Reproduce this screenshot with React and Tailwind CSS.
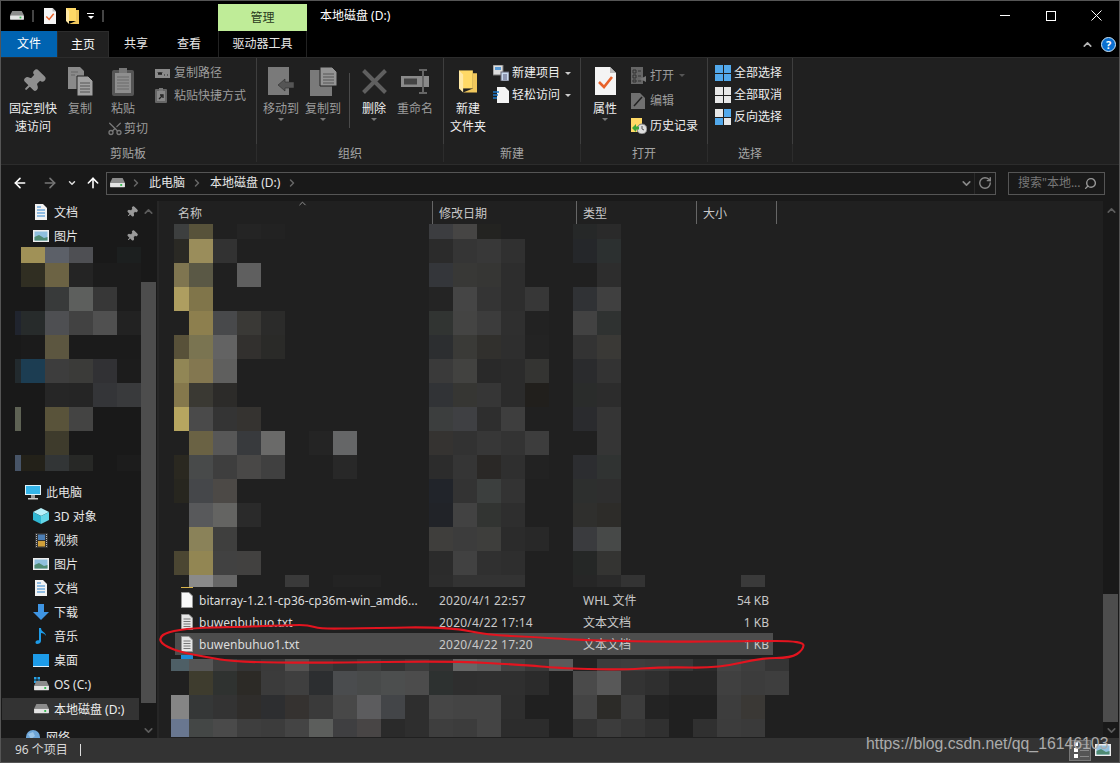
import { ArrowLeft, ArrowRight, ArrowUp, ChevronDown, ChevronRight, ChevronUp, Pin, RotateCw, Scissors, Search } from "lucide-react"

// ---------- small icons ----------
const Drive = ({ w = 15 }) => (
    <svg width={w} height={w * 0.62} viewBox="0 0 16 10">
        <polygon points="2.5,0 13.5,0 16,5 0,5" fill="#8c8c8c" />
        <rect y="5" width="16" height="5" rx="0.5" fill="#e4e4e4" />
        <rect x="11" y="6.5" width="2" height="2" fill="#31b94d" />
    </svg>
)

const PageCheck = ({ w = 12, h = 16 }) => (
    <svg width={w} height={h} viewBox="0 0 21 28">
        <path d="M0 0H15L21 6V28H0Z" fill="#f4f4f4" />
        <path d="M15 0V6H21Z" fill="#bbb" />
        <path d="M4 15L9 20L17 10" fill="none" stroke="#e8622a" strokeWidth="2.6" />
    </svg>
)

const Folder = ({ w = 13, h = 16 }) => (
    <svg width={w} height={h} viewBox="0 0 13 16">
        <path d="M0 0H10V13H0Z" fill="#ffd966" />
        <path d="M10 2H13V16H3L10 13Z" fill="#f0c75c" />
        <path d="M0 0V13L3 16V3Z" fill="#ffe9a6" />
    </svg>
)

const TextPage = ({ blank }) => (
    <svg width="12" height="16" viewBox="0 0 12 16">
        <path d="M0.5 0.5H8L11.5 4V15.5H0.5Z" fill={blank ? "#f8f8f8" : "#e6e6e6"} stroke="#999" />
        {!blank && <path d="M2.5 5H9.5M2.5 7.5H9.5M2.5 10H9.5M2.5 12.5H9.5" stroke="#777" />}
    </svg>
)

const GrayPages = () => (
    <svg width="25" height="29" viewBox="0 0 25 29">
        <path d="M0 0H12L16 4V22H0Z" fill="#8a8a8a" />
        <path d="M9 9H20L25 14V29H9Z" fill="#a2a2a2" stroke="#222" />
        <path d="M12 16H22M12 19H22M12 22H22M12 25H22" stroke="#555" />
        <path d="M3 5H10M3 8H7" stroke="#666" />
    </svg>
)

const Clipboard = () => (
    <svg width="22" height="29" viewBox="0 0 22 29">
        <rect y="3" width="22" height="26" rx="2" fill="#555" />
        <rect x="3" y="6" width="16" height="20" fill="#8e8e8e" />
        <path d="M5 10H17M5 13H17M5 16H17M5 19H17M5 22H17" stroke="#6a6a6a" />
        <rect x="7" y="1" width="8" height="5" fill="#777" />
    </svg>
)

const CopyPath = () => (
    <svg width="15" height="9" viewBox="0 0 15 9">
        <rect width="15" height="9" fill="#8a8a8a" />
        <path d="M3 3L4 6L5 3L6 6L7 3M9 6H10M12 6H13" stroke="#222" fill="none" />
    </svg>
)

const PasteLink = () => (
    <svg width="12" height="15" viewBox="0 0 12 15">
        <rect y="1" width="12" height="14" rx="1" fill="#666" />
        <rect x="2" y="3" width="8" height="10" fill="#888" />
        <rect x="4" y="0" width="4" height="3" fill="#777" />
        <path d="M4 11L7 8M5 7H8V10" stroke="#222" strokeWidth="1.3" fill="none" />
    </svg>
)

const MoveTo = () => (
    <svg width="27" height="28" viewBox="0 0 27 28">
        <path d="M0 0H21V28H0Z" fill="#7a7a7a" />
        <path d="M10 18L17 12V15H26V21H17V24Z" fill="#555" stroke="#222" strokeWidth="0.5" />
    </svg>
)

const CopyTo = () => (
    <svg width="27" height="29" viewBox="0 0 27 29">
        <path d="M0 3H22V29H0Z" fill="#7a7a7a" />
        <path d="M10 0H22L27 5V19H10Z" fill="#949494" stroke="#222" />
        <path d="M13 7H24M13 10H24M13 13H24M13 16H24" stroke="#555" />
    </svg>
)

const Cross = () => (
    <svg width="25" height="25" viewBox="0 0 25 25">
        <path d="M1.5 1.5L23.5 23.5M23.5 1.5L1.5 23.5" stroke="#5f5f5f" strokeWidth="4" />
    </svg>
)

const Rename = () => (
    <svg width="28" height="25" viewBox="0 0 28 25">
        <rect y="7" width="28" height="11" fill="#8a8a8a" />
        <rect x="3" y="9.5" width="13" height="6" fill="#444" />
        <path d="M18 1H26M22 1V24M18 24H26" stroke="#666" strokeWidth="2" fill="none" />
    </svg>
)

const NewItem = () => (
    <svg width="16" height="16" viewBox="0 0 16 16">
        <rect width="10" height="10" fill="#ddd" stroke="#777" />
        <rect x="2" y="2" width="6" height="3" fill="#5b9bd5" />
        <rect x="8" y="7" width="8" height="9" fill="#c9d9ee" stroke="#667" />
        <path d="M10 10H14M10 12H14M10 14H14" stroke="#557" />
    </svg>
)

const EasyAccess = () => (
    <svg width="16" height="16" viewBox="0 0 16 16">
        <path d="M4 0H12L16 4V16H4Z" fill="#f4f4f4" />
        <path d="M0 5H6M0 8H5M0 11H4" stroke="#1d78c9" strokeWidth="1.5" />
    </svg>
)

const OpenIcon = () => (
    <svg width="16" height="17" viewBox="0 0 16 17">
        <rect width="12" height="17" fill="#666" />
        <path d="M2 3H5V6H2ZM2 8H5V11H2ZM2 13H5V15H2ZM7 4H10M7 9H10M7 14H10" stroke="#333" fill="none" />
        <path d="M9 12L15 9V15Z" fill="#777" />
    </svg>
)

const EditIcon = () => (
    <svg width="14" height="16" viewBox="0 0 14 16">
        <path d="M0 0H9L14 5V16H0Z" fill="#707070" />
        <path d="M3 13L11 4" stroke="#222" strokeWidth="1.5" />
    </svg>
)

const HistoryIcon = () => (
    <svg width="16" height="16" viewBox="0 0 16 16">
        <rect width="11" height="14" y="0" fill="#ffd966" />
        <circle cx="11" cy="11" r="5" fill="#ddd" stroke="#777" />
        <path d="M11 8V11L13 12" stroke="#555" fill="none" />
        <path d="M1 10L5 6V8.5H8V11.5H5V14Z" fill="#3aa53a" />
    </svg>
)

const Quad = ({ colors }) => (
    <div className="grid h-[16px] w-[16px] grid-cols-2 gap-[1px]">
        {colors.map((c, i) => (
            <span key={i} style={{ backgroundColor: c }} />
        ))}
    </div>
)

const NavDoc = () => (
    <svg width="12" height="16" viewBox="0 0 12 16">
        <path d="M0 0H8L12 4V16H0Z" fill="#f2f2f2" />
        <path d="M2 3H6M2 6H10M2 9H10M2 12H10" stroke="#2f86d1" />
    </svg>
)

const NavPicture = () => (
    <svg width="16" height="12" viewBox="0 0 16 12">
        <rect width="16" height="12" fill="#eee" />
        <rect x="1.5" y="1.5" width="13" height="9" fill="#8fbfdd" />
        <path d="M1.5 7L6 5L11 8L14.5 7V10.5H1.5Z" fill="#4f8a72" />
    </svg>
)

const NavPc = () => (
    <svg width="16" height="15" viewBox="0 0 16 15">
        <rect width="16" height="10" fill="#dff3fb" />
        <rect x="1" y="1" width="14" height="8" fill="#35b5ea" />
        <rect x="6" y="10" width="4" height="3" fill="#999" />
        <rect x="3" y="13" width="10" height="1.5" fill="#ccc" />
    </svg>
)

const Nav3d = () => (
    <svg width="16" height="16" viewBox="0 0 16 16">
        <path d="M8 0L16 4L8 8L0 4Z" fill="#b7f0fa" />
        <path d="M0 4L8 8V16L0 12Z" fill="#2fb7d3" />
        <path d="M16 4L8 8V16L16 12Z" fill="#63d6e8" />
    </svg>
)

const NavVideo = () => (
    <svg width="13" height="15" viewBox="0 0 13 15">
        <rect width="13" height="15" fill="#333" />
        <rect x="3" y="1.5" width="7" height="5.5" fill="#4d7fb5" />
        <rect x="3" y="8" width="7" height="5.5" fill="#d0a03a" />
        <path d="M1.5 1V14M11.5 1V14" stroke="#bbb" strokeDasharray="1 1" />
    </svg>
)

const NavDown = () => (
    <svg width="16" height="16" viewBox="0 0 16 16">
        <path d="M5 0H11V8H16L8 16L0 8H5Z" fill="#3f95e3" />
    </svg>
)

const NavMusic = () => (
    <svg width="12" height="16" viewBox="0 0 12 16">
        <path d="M4 0H6C6 4 11 4 11 8C10 6 8 5 6 5V13C6 15 4 16 2 16C0 16 0 13 2 12.5C3 12 4 12 4 12.5Z" fill="#1d9be8" />
    </svg>
)

const NavDesktop = () => (
    <svg width="16" height="13" viewBox="0 0 16 13">
        <rect width="16" height="12" fill="#1d9be8" />
        <path d="M0 12H16V13H0Z" fill="#dfeffa" />
    </svg>
)

const NavC = () => (
    <div className="flex flex-col items-start">
        <svg width="6" height="6" viewBox="0 0 6 6" className="-mb-[2px]">
            <path d="M0 0H2.5V2.5H0ZM3.5 0H6V2.5H3.5ZM0 3.5H2.5V6H0ZM3.5 3.5H6V6H3.5Z" fill="#27a3e8" />
        </svg>
        <Drive w={15} />
    </div>
)

const NavGlobe = () => (
    <svg width="14" height="14" viewBox="0 0 14 14">
        <circle cx="7" cy="7" r="7" fill="#6ea6d8" />
        <path d="M2 4L7 2L9 6L5 9Z" fill="#9ac5e8" />
    </svg>
)

const Tri = ({ color = "border-t-[#a8a8a8]" }) => <span className={`inline-block border-x-[3px] border-t-[3px] border-x-transparent ${color}`} />

// ---------- ribbon ----------
const BigBtn = ({ icon, label, w, cls = "", tint = "text-[#9c9c9c]", arrow }) => (
    <div className={`flex shrink-0 flex-col items-center ${w} ${cls}`}>
        <div className="flex h-[38px] items-center justify-center">{icon}</div>
        <div className={`text-center leading-[18px] ${tint}`}>
            {label.map((l) => (
                <div key={l} className="whitespace-nowrap">{l}</div>
            ))}
        </div>
        {arrow && <Tri color="border-t-[#777]" />}
    </div>
)

const SmallBtn = ({ icon, label, h = "h-[22px]", tint = "text-[#eee]", arrow, gap = "w-[19px]" }) => (
    <div className={`flex items-center ${h} ${tint}`}>
        <div className={`flex shrink-0 items-center ${gap}`}>{icon}</div>
        <span className="whitespace-nowrap">{label}</span>
        {arrow && <span className="ml-[5px] flex"><Tri color={arrow} /></span>}
    </div>
)

const Group = ({ w, label, children }) => (
    <div className={`flex flex-col ${w}`}>
        <div className="flex h-[86px] border-r border-[#3e3e3e] pt-[4px]">{children}</div>
        <div className="flex h-[18px] items-center justify-center border-r border-[#2c2c2c] pt-[2px] text-[#a5a5a5]">{label}</div>
    </div>
)

function Ribbon() {
    return (
        <div className="flex h-[108px] border-y border-[#2c2c2c] bg-[#202020]">
            <Group w="w-[257px]" label="剪贴板">
                <div className="flex pl-[8px]">
                    <BigBtn w="w-[50px]" tint="text-[#eee]" label={["固定到快", "速访问"]} icon={<Pin size={25} className="rotate-45 text-[#8f8f8f]" fill="#8f8f8f" />} />
                    <BigBtn w="w-[36px]" cls="ml-[4px]" label={["复制"]} icon={<GrayPages />} />
                    <div className="flex w-[50px] flex-col">
                        <BigBtn w="w-[50px]" label={["粘贴"]} icon={<Clipboard />} />
                        <div className="flex h-[21px] items-center pl-[9px] text-[#9c9c9c]">
                            <Scissors size={17} className="w-[17px] -rotate-90 text-[#777]" />
                            <span className="ml-[1px] whitespace-nowrap">剪切</span>
                        </div>
                    </div>
                    <div className="ml-[7px] flex flex-col">
                        <SmallBtn h="h-[22px]" tint="text-[#9c9c9c]" label="复制路径" icon={<CopyPath />} />
                        <SmallBtn h="h-[23px]" tint="text-[#9c9c9c]" label="粘贴快捷方式" icon={<PasteLink />} />
                    </div>
                </div>
            </Group>
            <Group w="w-[187px]" label="组织">
                <div className="flex pl-[5px]">
                    <BigBtn w="w-[38px]" label={["移动到"]} icon={<MoveTo />} arrow />
                    <BigBtn w="w-[42px]" cls="ml-[2px]" label={["复制到"]} icon={<CopyTo />} arrow />
                    <div className="ml-[5px] mt-[11px] h-[55px] w-px bg-[#4a4a4a]" />
                    <BigBtn w="w-[28px]" cls="ml-[10px]" tint="text-[#eee]" label={["删除"]} icon={<Cross />} arrow />
                    <BigBtn w="w-[40px]" cls="ml-[7px]" label={["重命名"]} icon={<Rename />} />
                </div>
            </Group>
            <Group w="w-[137px]" label="新建">
                <div className="flex pl-[4px]">
                    <BigBtn w="w-[40px]" tint="text-[#eee]" label={["新建", "文件夹"]} icon={<Folder w={18} h={27} />} />
                    <div className="ml-[5px] flex flex-col">
                        <SmallBtn label="新建项目" arrow="border-t-[#ccc]" icon={<NewItem />} />
                        <SmallBtn label="轻松访问" arrow="border-t-[#ccc]" icon={<EasyAccess />} />
                    </div>
                </div>
            </Group>
            <Group w="w-[127px]" label="打开">
                <div className="flex pl-[9px]">
                    <BigBtn w="w-[30px]" tint="text-[#eee]" label={["属性"]} icon={<PageCheck w={21} h={28} />} arrow />
                    <div className="ml-[11px] flex flex-col pt-[1px]">
                        <SmallBtn h="h-[25px]" tint="text-[#9c9c9c]" label="打开" arrow="border-t-[#555]" icon={<OpenIcon />} />
                        <SmallBtn h="h-[25px]" tint="text-[#9c9c9c]" label="编辑" icon={<EditIcon />} />
                        <SmallBtn h="h-[25px]" label="历史记录" icon={<HistoryIcon />} />
                    </div>
                </div>
            </Group>
            <Group w="w-[85px]" label="选择">
                <div className="flex flex-col pl-[7px]">
                    <SmallBtn label="全部选择" icon={<Quad colors={["#52a9ec", "#52a9ec", "#52a9ec", "#52a9ec"]} />} />
                    <SmallBtn label="全部取消" icon={<Quad colors={["#e8e8e8", "#e8e8e8", "#e8e8e8", "#e8e8e8"]} />} />
                    <SmallBtn label="反向选择" icon={<Quad colors={["#e8e8e8", "#52a9ec", "#52a9ec", "#e8e8e8"]} />} />
                </div>
            </Group>
        </div>
    )
}

// ---------- mosaic data, one string per blurred row ----------
const Cells = ({ tokens, first }) => (
    <>
        {tokens.split(" ").map((c, i) => (
            <span key={i} className={i === 0 && first ? first : "w-[24px] shrink-0"} style={c === "." ? undefined : { backgroundColor: `#${c}` }} />
        ))}
    </>
)

const upperRows = [
    [15, "3d3f3f 57523a 202020 242424 222222", "3c3d40 464544 232321", "262828 2a2a2a"],
    [24, "2a2924 9a8d5b 323232", "2b2b2b 353535 383838 303030", "25272a 2c3030"],
    [24, "7f7550 5a5845 . 5f5f5f", "34363a 383836 363634 2d2d2d", ". 2d2d2d"],
    [24, "ae9e60 80754a", "242424 454545 343434 2d2d2d 373737", "303235 404040"],
    [24, ". 8d7f4e 48494b 3a3936 2b2b2a", "313432 444443 3c3c3c 2f2f2f 222222", "424242 2f3231"],
    [24, "585139 7a7451 636363 32302e 2a2a28", "2c2e30 3a3a37 31302d 2e2e2e 232323", "333333 3a3936"],
    [24, "918655 837750 5f5f5e", "3a3a3a 424240 292929 2b2b2b 343432", "2a2b2d 333333"],
    [24, "85784c 3a3933 2c2b29", "313336 363633 363636 2b2b2b 211f1c", "2a2c2b 2c2c2c"],
    [24, "b7a660 4a4a4a 343434 353330", "3c3e3e 3f4043 2e2e2e 3e3e3e", "2a2b2e 353535"],
    [24, ". 6a6244 575757 383a3d 6a6a69 . 242424 656667", "353331 323232 373737 333333 3d3d3d", ". 353535"],
    [24, "2a2820 484a4a 3e3e3e 494847 404040 . . 282828", "2c2c2c 353535 2a2826 2f2f2f 222222", "2c2d30 303332"],
    [24, "27261f 45474a 4c4946", "21242a 333333 3c3f3e 333333", "2d2f2e 2e2e2e"],
    [24, ". 58595b 646462 2a2a2a", "212328 424242 323432 2e2e2e", "2f2f2d 2d2c29"],
    [24, ". 8a8259 3f3f3e", "3f3e3c 3c3c3c 3e3e3c 2b2b2b 282828", "3a3b3e 474948"],
    [24, "4b4632 928653 414141 424140", "2b2b2b 414141 303030 2e2e2e", "252726 343432"],
    [12, ". 8a8a8a 666666 . . 3a3a3a . 232323 232323", "2c2c2c 333333 333333 333333", "262626 2a2a2a 333333 . . . . 3a3a3a"],
]

const lowerRows = [
    [12, "4e5f66 555555 3e3e3e 343434 3a3a3a 555352 3a3a3a 333333 3c3c3c 333333 3c3c3c 333333 666666 5e5e5e 444444 3a3a3a 5a5a5a 232323 3c3c3c 3e3e3e 3c3c3c 383838 2b2b2b 444444 3e3e3e 353535"],
    [24, ". 3e3c2e 2f3230 2c2a26 3b3b3b 3f3f3f 2c2e30 4a4c4e 484a4a 4c4e4e 4c4c4c 2d3130 2e2e2e 2f2f2f 2f2f2f 2b2b2b . 4a4a4a 585858 333333 2f2f2f 262626 262626 404040 3c3c3c 3e3e3e"],
    [24, "858585 353737 333333 2f2d2b 2d2e30 353230 3a3a3a 484848 5c5c5e 434548 2e2e2e 464646 444444 444444 2e2e2e . . 444444 2c2b28 3c3c3c 232323 . . 3d3d3d 3a3835"],
    [18, "697790 444746 4a4a4a 3e3e3e 3c3c3c 444444 5c5e5c 3f3f41 484545 2a2a2a 2e2e2e 3e3e3e 3c3c3c 444444 2c2c2c 2c2c2c . 333333 3c3c3c 363636 303030 . 303030 3c3c3c 3a3a3a"],
]

const navRows = [
    [16, ". a09157 5c6068 4e4f53 . 1c1f1f"],
    [24, ". 302e22 6c6344 242424 1c1c1c 1c1c1c"],
    [24, ". . 383a3a 5d5f5d 373737 1c1c1c"],
    [24, "20242e 272b2b 4e4f52 424242 505050 222222"],
    [24, ". 1b1b1b 5c5640 1b1b1b 1b1b1b 1b1b1b"],
    [24, "222a2e 1c3d52 3d3d3d 3b3b39 313134 1c1c1c"],
    [24, ". . 262626 252525 343538 393a3c"],
    [24, "5e6254 . 59533a 444443"],
    [24, ". . 3e3b2c"],
    [16, "475467 232119 323536 272826 . 1c1c1c"],
]

// ---------- navigation pane ----------
const NavRow = ({ icon, label, level = 2, pin }) => (
    <div className={`flex h-[24px] shrink-0 items-center text-[#e6e6e6] ${level === 1 ? "pl-[25px]" : "pl-[33px]"}`}>
        <div className="flex w-[16px] shrink-0 justify-center">{icon}</div>
        <span className="ml-[5px] whitespace-nowrap pt-[2px]">{label}</span>
        {pin && <Pin size={12} className="ml-auto mr-[3px] rotate-45 text-[#9a9a9a]" fill="#9a9a9a" />}
    </div>
)

function NavPane() {
    return (
        <div className="flex w-[157px] shrink-0 bg-[#191919]">
            <div className="flex w-[141px] shrink-0 flex-col overflow-hidden">
                <div className="-mt-[1px] h-[24px]"><NavRow icon={<NavDoc />} label="文档" pin /></div>
                <div className="h-[23px]"><NavRow icon={<NavPicture />} label="图片" pin /></div>
                <div className="flex h-[224px] shrink-0 flex-col pl-[15px]">
                    {navRows.map(([h, t], i) => (
                        <div key={i} className="flex shrink-0" style={{ height: h }}>
                            <Cells tokens={t} first="w-[6px] shrink-0" />
                        </div>
                    ))}
                </div>
                <div className="h-[9px] shrink-0" />
                <NavRow level={1} icon={<NavPc />} label="此电脑" />
                <NavRow icon={<Nav3d />} label="3D 对象" />
                <NavRow icon={<NavVideo />} label="视频" />
                <NavRow icon={<NavPicture />} label="图片" />
                <NavRow icon={<NavDoc />} label="文档" />
                <NavRow icon={<NavDown />} label="下载" />
                <NavRow icon={<NavMusic />} label="音乐" />
                <NavRow icon={<NavDesktop />} label="桌面" />
                <NavRow icon={<NavC />} label="OS (C:)" />
                <div className="mx-[2px] mt-[2px] flex h-[22px] shrink-0 items-center bg-[#333333] pl-[31px] text-[#eee]">
                    <div className="flex w-[16px] justify-center"><Drive w={15} /></div>
                    <span className="ml-[5px] whitespace-nowrap pt-[1px]">本地磁盘 (D:)</span>
                </div>
                <div className="mt-[5px]"><NavRow level={1} icon={<NavGlobe />} label="网络" /></div>
            </div>
            <div className="flex w-[15px] shrink-0 flex-col">
                <div className="flex h-[81px] justify-center pt-[4px]"><ChevronUp size={13} strokeWidth={3} className="text-[#5c5c5c]" /></div>
                <div className="h-[421px] bg-[#4d4d4d]" />
                <div className="flex flex-1 items-end justify-center pb-[1px]"><ChevronDown size={13} strokeWidth={3} className="text-[#5c5c5c]" /></div>
            </div>
        </div>
    )
}

// ---------- file list ----------
const files = [
    { name: "bitarray-1.2.1-cp36-cp36m-win_amd6...", date: "2020/4/1 22:57", type: "WHL 文件", size: "54 KB", blank: true },
    { name: "buwenbuhuo.txt", date: "2020/4/22 17:14", type: "文本文档", size: "1 KB" },
    { name: "buwenbuhuo1.txt", date: "2020/4/22 17:20", type: "文本文档", size: "1 KB", selected: true },
]

function FilePane() {
    return (
        <div className="flex w-[944px] shrink-0 flex-col bg-[#202020]">
            <div className="flex h-[23px] shrink-0 text-[#c8c8c8]">
                <div className="relative flex w-[274px] items-center border-r border-[#666] pl-[19px] pt-[3px]">
                    名称
                    <ChevronUp size={11} className="absolute left-[138px] top-[-3px] text-[#999]" />
                </div>
                <div className="flex w-[144px] items-center border-r border-[#666] pl-[6px] pt-[3px]">修改日期</div>
                <div className="flex w-[120px] items-center border-r border-[#666] pl-[6px] pt-[3px]">类型</div>
                <div className="flex w-[80px] items-center border-r border-[#666] pl-[6px] pt-[3px]">大小</div>
            </div>
            <div className="flex shrink-0 flex-col pl-[15px]">
                {upperRows.map(([h, a, b, c], i) => (
                    <div key={i} className="flex" style={{ height: h }}>
                        <div className="flex w-[255px] shrink-0"><Cells tokens={a} first="w-[15px] shrink-0" /></div>
                        <div className="flex w-[144px] shrink-0"><Cells tokens={b} /></div>
                        <div className="flex flex-1"><Cells tokens={c} /></div>
                    </div>
                ))}
            </div>
            <div className="ml-[22px] h-[1px] w-[12px] shrink-0 bg-[#d9b44a]" />
            <div className="h-[1px] shrink-0" />
            <div className="ml-[16px] flex w-[598px] shrink-0 flex-col text-[#dcdcdc]">
                {files.map((f) => (
                    <div key={f.name} className={`flex h-[22px] items-center ${f.selected ? "bg-[#4d4d4d]" : ""}`}>
                        <div className="flex w-[258px] shrink-0 items-center pl-[6px]">
                            <div className="flex w-[18px] shrink-0"><TextPage blank={f.blank} /></div>
                            <span className="whitespace-nowrap pt-[2px]">{f.name}</span>
                        </div>
                        <div className="w-[144px] shrink-0 whitespace-nowrap pl-[6px] pt-[2px] tracking-[0.2px] text-[#c8c8c8]">{f.date}</div>
                        <div className="w-[120px] shrink-0 whitespace-nowrap pl-[6px] pt-[2px] text-[#c8c8c8]">{f.type}</div>
                        <div className="flex-1 whitespace-nowrap pr-[4px] pt-[2px] text-right text-[#c8c8c8]">{f.size}</div>
                    </div>
                ))}
            </div>
            <div className="ml-[22px] h-[4px] w-[12px] shrink-0 bg-[#1a8ad4]" />
            <div className="flex shrink-0 flex-col pl-[12px]">
                {lowerRows.map(([h, t], i) => (
                    <div key={i} className="flex" style={{ height: h }}>
                        <Cells tokens={t} first="w-[18px] shrink-0" />
                    </div>
                ))}
            </div>
        </div>
    )
}

// smooth closed curve through the hand-drawn scribble
const scribble = [[291, 625], [235, 627], [193, 628], [167, 632], [159, 638], [163, 645], [180, 652], [206, 657], [235, 662], [321, 663], [449, 661], [526, 665], [556, 668], [620, 670], [663, 667], [718, 668], [761, 658], [791, 658], [803, 650], [804, 641], [748, 641], [663, 642], [577, 640], [535, 637], [488, 635], [449, 627], [364, 628], [321, 629], [308, 625]]
const scribblePath = () => {
    const mid = (a, b) => [(a[0] + b[0]) / 2, (a[1] + b[1]) / 2]
    const n = scribble.length
    const start = mid(scribble[n - 1], scribble[0])
    let d = `M${start[0]} ${start[1]}`
    scribble.forEach((p, i) => {
        const m = mid(p, scribble[(i + 1) % n])
        d += `Q${p[0]} ${p[1]} ${m[0]} ${m[1]}`
    })
    return d
}

export default function App() {
    return (
        <div className="relative h-[763px] w-[1120px] overflow-hidden bg-black text-[12px] text-white [font-family:'Noto_Sans','Noto_Sans_CJK_SC',sans-serif]">
            {/* title bar */}
            <div className="flex h-[31px] items-center">
                <div className="ml-[10px] flex w-[14px]"><Drive w={14} /></div>
                <div className="ml-[8px] h-[12px] w-[2px] bg-[#444]" />
                <div className="ml-[10px] flex"><PageCheck /></div>
                <div className="ml-[10px] flex"><Folder /></div>
                <div className="ml-[8px] flex w-[7px] flex-col items-center gap-[2px]">
                    <span className="h-px w-[7px] bg-white" />
                    <span className="border-x-[3px] border-t-[3px] border-x-transparent border-t-white" />
                </div>
                <div className="ml-[8px] h-[12px] w-[2px] bg-[#444]" />
                <div className="ml-[114px] mt-[4px] flex h-[27px] w-[89px] items-center justify-center bg-[#bfec98] text-[#2a3a20]">管理</div>
                <div className="ml-[13px] whitespace-nowrap">本地磁盘 (D:)</div>
                <div className="flex-1" />
                <div className="flex h-[31px] w-[46px] items-center justify-center"><span className="h-px w-[10px] bg-white" /></div>
                <div className="flex h-[31px] w-[46px] items-center justify-center pr-[1px]"><span className="h-[10px] w-[10px] border border-white" /></div>
                <div className="flex h-[31px] w-[46px] items-center justify-center pr-[2px]">
                    <svg width="11" height="11" viewBox="0 0 11 11"><path d="M0.5 0.5L10.5 10.5M10.5 0.5L0.5 10.5" stroke="#fff" /></svg>
                </div>
            </div>

            {/* tabs */}
            <div className="flex h-[26px] items-stretch">
                <div className="ml-[1px] flex w-[56px] items-center justify-center bg-[#0063b1]">文件</div>
                <div className="flex w-[52px] items-center justify-center border-x border-t border-[#2c2c2c] bg-[#202020]">主页</div>
                <div className="flex w-[54px] items-center justify-center text-[#e6e6e6]">共享</div>
                <div className="flex w-[52px] items-center justify-center text-[#e6e6e6]">查看</div>
                <div className="ml-[3px] flex w-[89px] items-center justify-center border-x border-[#222] text-[#e6e6e6]">驱动器工具</div>
                <div className="flex-1" />
                <div className="flex items-center"><ChevronUp size={13} strokeWidth={3} className="text-[#b5b5b5]" /></div>
                <div className="ml-[7px] mr-[4px] flex items-center">
                    <span className="flex h-[15px] w-[15px] items-center justify-center rounded-full border border-[#cfe6f8] bg-[#0a6fd0] text-[11px] font-bold leading-none">?</span>
                </div>
            </div>

            <Ribbon />

            {/* address bar */}
            <div className="flex h-[36px] items-center bg-[#191919]">
                <ArrowLeft size={16} strokeWidth={2.4} className="ml-[12px] text-white" />
                <ArrowRight size={16} strokeWidth={2.4} className="ml-[14px] text-[#777]" />
                <ChevronDown size={10} strokeWidth={3.5} className="ml-[9px] text-[#ddd]" />
                <ArrowUp size={16} strokeWidth={2.4} className="ml-[8px] text-white" />
                <div className="ml-[5px] flex h-[23px] w-[890px] items-center border border-[#555] text-[#e6e6e6]">
                    <div className="ml-[3px] flex w-[15px]"><Drive w={15} /></div>
                    <ChevronRight size={12} strokeWidth={3} className="ml-[5px] text-[#666]" />
                    <span className="ml-[7px] whitespace-nowrap">此电脑</span>
                    <ChevronRight size={12} strokeWidth={3} className="ml-[6px] text-[#666]" />
                    <span className="ml-[7px] whitespace-nowrap">本地磁盘 (D:)</span>
                    <ChevronRight size={12} strokeWidth={3} className="ml-[6px] text-[#666]" />
                    <div className="flex-1" />
                    <ChevronDown size={13} strokeWidth={3} className="text-[#888]" />
                    <div className="ml-[1px] h-full w-px bg-[#2a2a2a]" />
                    <RotateCw size={14} strokeWidth={2.4} className="mx-[3px] text-[#888]" />
                </div>
                <div className="ml-[12px] flex h-[23px] w-[97px] items-center border border-[#555] pl-[9px] text-[#777]">
                    <span className="whitespace-nowrap">搜索"本地...</span>
                    <Search size={13} strokeWidth={2.6} className="ml-auto mr-[7px] -scale-x-100 text-[#999]" />
                </div>
            </div>

            {/* main area */}
            <div className="flex h-[537px]">
                <NavPane />
                <div className="w-[2px] shrink-0 bg-[#262626]" />
                <FilePane />
                <div className="flex w-[17px] shrink-0 flex-col bg-[#191919]">
                    <div className="flex h-[393px] justify-center pt-[3px]"><ChevronUp size={13} strokeWidth={3} className="text-[#5c5c5c]" /></div>
                    <div className="mr-[2px] h-[128px] bg-[#4d4d4d]" />
                    <div className="flex flex-1 items-center justify-center"><ChevronDown size={13} strokeWidth={3} className="text-[#5c5c5c]" /></div>
                </div>
            </div>

            {/* status bar */}
            <div className="flex h-[25px] items-center border-b border-[#555] bg-[#333333] pl-[15px] text-[#d8d8d8]">
                <span className="whitespace-nowrap">96 个项目</span>
                <span className="ml-[12px] h-[12px] w-px bg-[#ddd]" />
                <div className="flex-1" />
                <div className="flex h-[21px] w-[22px] flex-col items-start justify-center gap-[2px] border border-[#777] bg-[#555] pl-[4px]">
                    <span className="flex items-center gap-[2px]"><span className="h-[4px] w-[4px] bg-white" /><span className="h-px w-[9px] bg-[#888]" /></span>
                    <span className="flex items-center gap-[2px]"><span className="h-[4px] w-[4px] bg-white" /><span className="h-px w-[9px] bg-[#888]" /></span>
                    <span className="flex items-center gap-[2px]"><span className="h-[4px] w-[4px] bg-white" /><span className="h-px w-[9px] bg-[#888]" /></span>
                </div>
                <div className="ml-[4px] mr-[9px] flex"><NavPicture /></div>
            </div>

            {/* red scribble and watermark sit on top of the screenshot */}
            <svg className="pointer-events-none absolute left-0 top-0" width="1120" height="763">
                <path d={scribblePath()} fill="none" stroke="#e3141f" strokeWidth="2.2" />
            </svg>
            <div className="pointer-events-none absolute left-[866px] top-[732px] whitespace-nowrap text-[15.8px] text-[#ababab] [font-family:'Liberation_Sans',sans-serif]">https://blog.csdn.net/qq_16146103</div>
            <div className="pointer-events-none absolute inset-0 border-x border-t border-[#555]" />
        </div>
    )
}
